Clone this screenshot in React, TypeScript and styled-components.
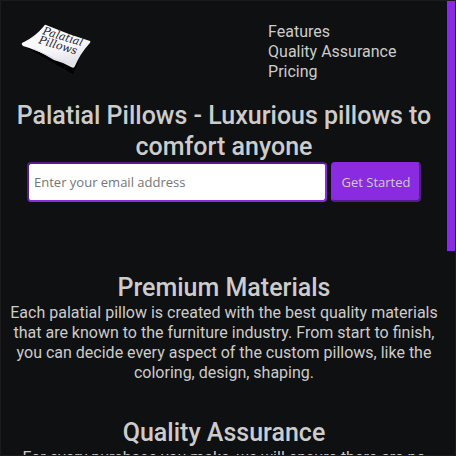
import React from "react";
import styled, { createGlobalStyle } from "styled-components";

const GlobalStyle = createGlobalStyle`
  * { box-sizing: border-box; margin: 0; padding: 0; }
  body {
    background: #0f1011;
    color: #cccccc;
    font-family: Roboto, "Open Sans", sans-serif;
    font-size: 16px;
    line-height: 20px;
  }
`;

const Page = styled.div`
  display: flex;
  height: 100vh;
  overflow: hidden;
  border: 1px solid #1d1b1e;
`;

const Content = styled.div`
  flex: 1;
  min-width: 0;
  padding: 0 6px;
  overflow: hidden;
`;

const ScrollRail = styled.div`
  flex: 0 0 8px;
`;

const ScrollThumb = styled.div`
  height: 55%;
  background: #8a2be2;
`;

const Header = styled.header`
  display: grid;
  grid-template-columns: 10fr 7fr;
  padding: 21px 0 18px 14px;
`;

const Logo = styled.svg`
  display: block;
  width: 72px;
  height: 56px;
`;

const Nav = styled.nav`
  display: flex;
  flex-direction: column;
  align-items: flex-start;
`;

const NavLink = styled.a`
  color: inherit;
  text-decoration: none;
  white-space: nowrap;
`;

const Heading = styled.h2`
  font-size: 25px;
  line-height: 31px;
  font-weight: 500;
`;

const Hero = styled.section`
  text-align: center;
`;

const Form = styled.form`
  display: flex;
  justify-content: center;
  gap: 4px;
`;

const EmailInput = styled.input`
  width: 300px;
  height: 40px;
  padding: 0 5px;
  border: 2px inset #8a2be2;
  border-radius: 4px;
  background: #ffffff;
  font: 13px "Open Sans", sans-serif;
  &::placeholder { color: #757575; }
`;

const SubmitButton = styled.button`
  width: 90px;
  height: 40px;
  border: 2px outset #8a2be2;
  border-radius: 4px;
  background: #8a2be2;
  color: #cccccc;
  font: 13px "Open Sans", sans-serif;
`;

const Features = styled.main`
  display: flex;
  flex-direction: column;
  gap: 34px;
  padding-top: 70px;
  text-align: center;
`;

const features = [
  {
    id: "features",
    title: "Premium Materials",
    text: "Each palatial pillow is created with the best quality materials that are known to the furniture industry. From start to finish, you can decide every aspect of the custom pillows, like the coloring, design, shaping.",
  },
  {
    id: "quality",
    title: "Quality Assurance",
    text: "For every purchase you make, we will ensure there are no",
  },
];

const PillowLogo = () => (
  <Logo viewBox="21 22 72 56" role="img" aria-label="Palatial Pillows">
    <defs>
      <linearGradient id="fabric" x1="0" y1="0" x2="0.4" y2="1">
        <stop offset="0" stopColor="#ffffff" />
        <stop offset="0.7" stopColor="#f6f5f9" />
        <stop offset="1" stopColor="#e4e2e9" />
      </linearGradient>
    </defs>
    <path d="M24 46 Q48 60 73 74 L79 61 L72 65 Z" fill="#000000" />
    <path
      d="M46 25 Q67 34 90 41 Q91 42 89 44 Q80 54 75 66 Q74 69 71 67 Q62 62 54 60 Q38 50 23 46 Q20 43 24 42 Q36 36 44 26 Q45 24 46 25 Z"
      fill="url(#fabric)"
    />
    <path d="M34 49 Q46 54 57 60 Q65 61 72 65" fill="none" stroke="#dddbe3" />
    <g fill="#25232a" fontFamily="DejaVu Serif" fontStyle="italic" fontSize="11">
      <text transform="translate(42 34) rotate(17)">Palatial</text>
      <text transform="translate(38 43) rotate(17)">Pillows</text>
    </g>
  </Logo>
);

export default function App() {
  return (
    <>
      <GlobalStyle />
      <Page>
        <Content>
          <Header>
            <PillowLogo />
            <Nav>
              <NavLink href="#features">Features</NavLink>
              <NavLink href="#quality">Quality Assurance</NavLink>
              <NavLink href="#pricing">Pricing</NavLink>
            </Nav>
          </Header>
          <Hero>
            <Heading as="h1">Palatial Pillows - Luxurious pillows to comfort anyone</Heading>
            <Form onSubmit={(event: React.FormEvent) => event.preventDefault()}>
              <EmailInput type="email" aria-label="Email address" placeholder="Enter your email address" />
              <SubmitButton type="submit">Get Started</SubmitButton>
            </Form>
          </Hero>
          <Features>
            {features.map((feature) => (
              <section key={feature.id} id={feature.id}>
                <Heading>{feature.title}</Heading>
                <p>{feature.text}</p>
              </section>
            ))}
          </Features>
        </Content>
        <ScrollRail aria-hidden="true">
          <ScrollThumb />
        </ScrollRail>
      </Page>
    </>
  );
}
